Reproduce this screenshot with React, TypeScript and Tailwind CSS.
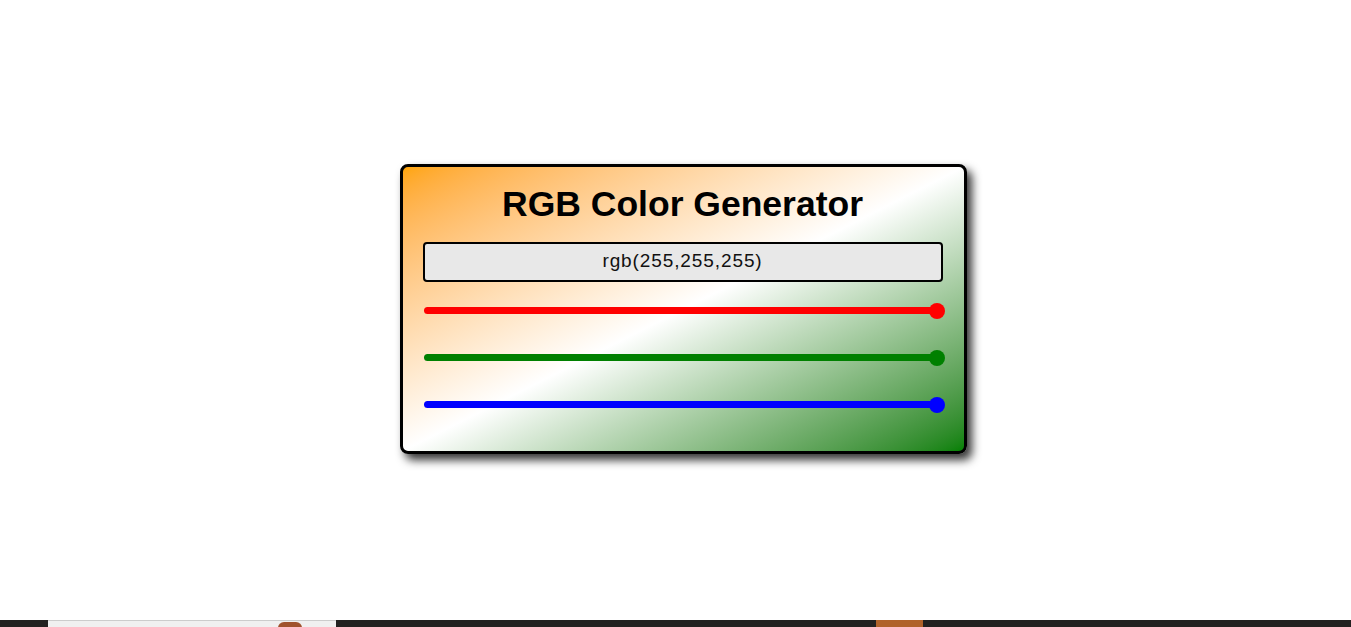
import React from 'react'

const sliders = [
  { color: 'bg-[#ff0000]', value: 255 },
  { color: 'bg-[#008000]', value: 255 },
  { color: 'bg-[#0000ff]', value: 255 },
]

function Slider({ color }: { color: string }) {
  return (
    <div className="relative ml-[1px] h-[16px] w-[521px] flex items-center">
      <div className={`h-[7px] w-[515px] rounded-full ${color}`} />
      <div className={`absolute right-0 top-0 h-[16px] w-[16px] rounded-full ${color}`} />
    </div>
  )
}

export default function App() {
  return (
    <div className="h-[627px] w-full bg-white flex flex-col font-['Liberation_Sans',Arial,sans-serif]">
      <div className="h-[620px] flex items-center justify-center pl-[15px] pb-[3px]">
        <div className="w-[567px] h-[290px] border-[3px] border-black rounded-[8px] shadow-[5px_6px_10px_rgba(0,0,0,0.8)] bg-linear-to-br from-[#ffa500] via-white to-[#008000] pl-[20px] pr-[21px] pt-[17px] flex flex-col">
          <h1 className="text-center text-[35.5px] font-bold leading-[40px] text-black">RGB Color Generator</h1>
          <div className="mt-[18px] h-[40px] w-[520px] border-2 border-black rounded-[4px] bg-[#e8e8e8] flex items-center justify-center text-[19px] tracking-[0.9px] text-[#111]">
            rgb(255,255,255)
          </div>
          <div className="mt-[21px] flex flex-col gap-[31px]">
            {sliders.map((s, i) => (
              <Slider key={i} color={s.color} />
            ))}
          </div>
        </div>
      </div>
      <div className="h-[7px] flex bg-[#222120]">
        <div className="w-[48px]" />
        <div className="w-[288px] bg-[#f0f0f0] border-t border-[#ccc] relative">
          <div className="absolute left-[230px] top-[1px] h-[6px] w-[24px] rounded-t-full bg-[#a0522d]" />
        </div>
        <div className="w-[540px]" />
        <div className="w-[47px] bg-[#b0622a]" />
        <div className="flex-1" />
      </div>
    </div>
  )
}
